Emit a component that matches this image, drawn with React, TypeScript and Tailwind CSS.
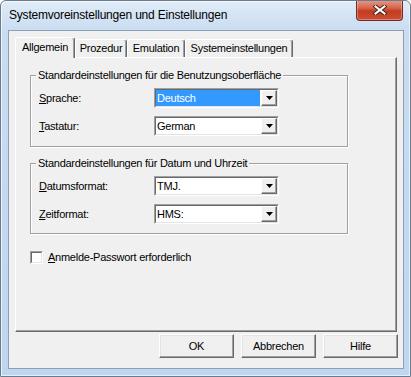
import type { ReactNode } from "react";

function CloseButton() {
	return (
		<div className="-mt-px flex h-[21px] w-[47px] items-center justify-center rounded-b-[4px] border border-t-0 border-[#6e2c22] bg-[linear-gradient(#e49c8b,#d6634b_40%,#c23a20_55%,#cf4f34)] shadow-[inset_0_0_0_1px_rgba(255,255,255,0.3)]">
			<svg width="14" height="10" viewBox="0 0 14 10">
				<path d="M2.5 1.5 L11.5 8.5 M11.5 1.5 L2.5 8.5" stroke="#3f2622" strokeWidth="4" strokeLinecap="square" />
				<path d="M2.5 1.5 L11.5 8.5 M11.5 1.5 L2.5 8.5" stroke="#ffffff" strokeWidth="2" strokeLinecap="square" />
			</svg>
		</div>
	);
}

function Tab({ label, width, active }: { label: string; width: string; active?: boolean }) {
	return (
		<div
			className={
				active
					? `relative z-10 -mb-px h-[21px] ${width} rounded-t-[3px] border-t border-l border-r border-white border-r-[#696969] bg-[#f0f0f0] pt-[3px] text-center leading-[13px] shadow-[inset_-1px_0_0_#a0a0a0]`
					: `h-[18px] ${width} rounded-t-[3px] border-t border-l border-r border-white border-r-[#696969] bg-[#f0f0f0] pt-[2px] text-center leading-[13px] shadow-[inset_-1px_0_0_#a0a0a0]`
			}
		>
			{label}
		</div>
	);
}

function Combo({ value, selected }: { value: string; selected?: boolean }) {
	return (
		<div className="flex h-[20px] w-[125px] border border-[#a0a0a0] border-r-white border-b-white">
			<div className="flex flex-1 border border-[#696969] border-r-[#e3e3e3] border-b-[#e3e3e3] bg-white">
				<div
					className={
						selected
							? "mr-px flex-1 bg-[#3399ff] pl-px leading-[16px] text-white"
							: "mr-px flex-1 pl-px leading-[16px] text-black"
					}
				>
					{value}
				</div>
				<div className="flex w-[16px] items-center justify-center border border-white border-r-[#696969] border-b-[#696969] bg-[#f0f0f0] shadow-[inset_-1px_-1px_0_#a0a0a0]">
					<svg width="7" height="4" viewBox="0 0 7 4">
						<path d="M0 0 H7 L3.5 4 Z" fill="#000" />
					</svg>
				</div>
			</div>
		</div>
	);
}

function Row({ label, children }: { label: ReactNode; children: ReactNode }) {
	return (
		<div className="flex h-[20px] items-center">
			<div className="w-[115px]">{label}</div>
			{children}
		</div>
	);
}

function Group({ title, children, className }: { title: string; children: ReactNode; className: string }) {
	return (
		<fieldset
			className={`${className} ml-[14px] w-[318px] border border-[#a0a0a0] px-[8px] pt-[6px] shadow-[inset_1px_1px_0_#fff,1px_1px_0_#fff]`}
		>
			<legend className="-ml-[3px] bg-[#f0f0f0] px-[2px] leading-[13px]">{title}</legend>
			<div className="flex flex-col gap-[8px]">{children}</div>
		</fieldset>
	);
}

function Button({ label }: { label: string }) {
	return (
		<div className="flex h-[24px] w-[75px] items-center justify-center border border-white border-r-[#696969] border-b-[#696969] bg-[#f0f0f0] shadow-[inset_-1px_-1px_0_#a0a0a0,inset_1px_1px_0_#e3e3e3]">
			{label}
		</div>
	);
}

export default function App() {
	return (
		<div className="h-[377px] w-[411px] bg-white">
			<div className="flex h-[377px] w-[411px] flex-col overflow-hidden rounded-t-[6px] border border-[#6b7b8f] bg-[linear-gradient(#e0ebf7,#c9dcf1_30px,#bfd6f0)] font-['Liberation_Sans',Arial,sans-serif] text-[11px] tracking-[-0.25px] text-black shadow-[inset_1px_1px_0_rgba(255,255,255,0.7),inset_-1px_-1px_0_rgba(255,255,255,0.6)]">
				{/* title bar */}
				<div className="flex h-[29px] items-start justify-between pl-[8px] pr-[7px]">
					<span className="mt-[7px] text-[12px] leading-[15px] tracking-[-0.2px]">
						Systemvoreinstellungen und Einstellungen
					</span>
					<CloseButton />
				</div>

				{/* client area */}
				<div className="ml-[7px] mr-[6px] h-[339px] border border-[#8d9fb5] bg-[#f0f0f0]">
					<div className="ml-[6px] mt-[6px] flex h-[20px] items-end">
						<Tab label="Allgemein" width="w-[60px]" active />
						<Tab label="Prozedur" width="w-[52px]" />
						<Tab label="Emulation" width="w-[58px]" />
						<Tab label="Systemeinstellungen" width="w-[108px]" />
					</div>

					<div className="ml-[6px] h-[275px] w-[382px] border border-white border-r-[#696969] border-b-[#696969] shadow-[inset_-1px_-1px_0_#a0a0a0]">
						<Group title="Standardeinstellungen für die Benutzungsoberfläche" className="mt-[11px] pb-[10px]">
							<Row
								label={
									<>
										<u>S</u>prache:
									</>
								}
							>
								<Combo value="Deutsch" selected />
							</Row>
							<Row
								label={
									<>
										<u>T</u>astatur:
									</>
								}
							>
								<Combo value="German" />
							</Row>
						</Group>

						<Group title="Standardeinstellungen für Datum und Uhrzeit" className="mt-[10px] pb-[9px]">
							<Row
								label={
									<>
										<u>D</u>atumsformat:
									</>
								}
							>
								<Combo value="TMJ." />
							</Row>
							<Row
								label={
									<>
										<u>Z</u>eitformat:
									</>
								}
							>
								<Combo value="HMS:" />
							</Row>
						</Group>

						<div className="ml-[14px] mt-[17px] flex h-[13px] items-center">
							<div className="h-[13px] w-[13px] border border-[#a0a0a0] border-r-white border-b-white">
								<div className="h-full w-full border border-[#696969] border-r-[#e3e3e3] border-b-[#e3e3e3] bg-white" />
							</div>
							<span className="ml-[5px] leading-[13px]">
								<u>A</u>nmelde-Passwort erforderlich
							</span>
						</div>
					</div>

					<div className="mt-[2px] flex justify-end gap-[7px] pr-[5px]">
						<Button label="OK" />
						<Button label="Abbrechen" />
						<Button label="Hilfe" />
					</div>
				</div>
			</div>
		</div>
	);
}
